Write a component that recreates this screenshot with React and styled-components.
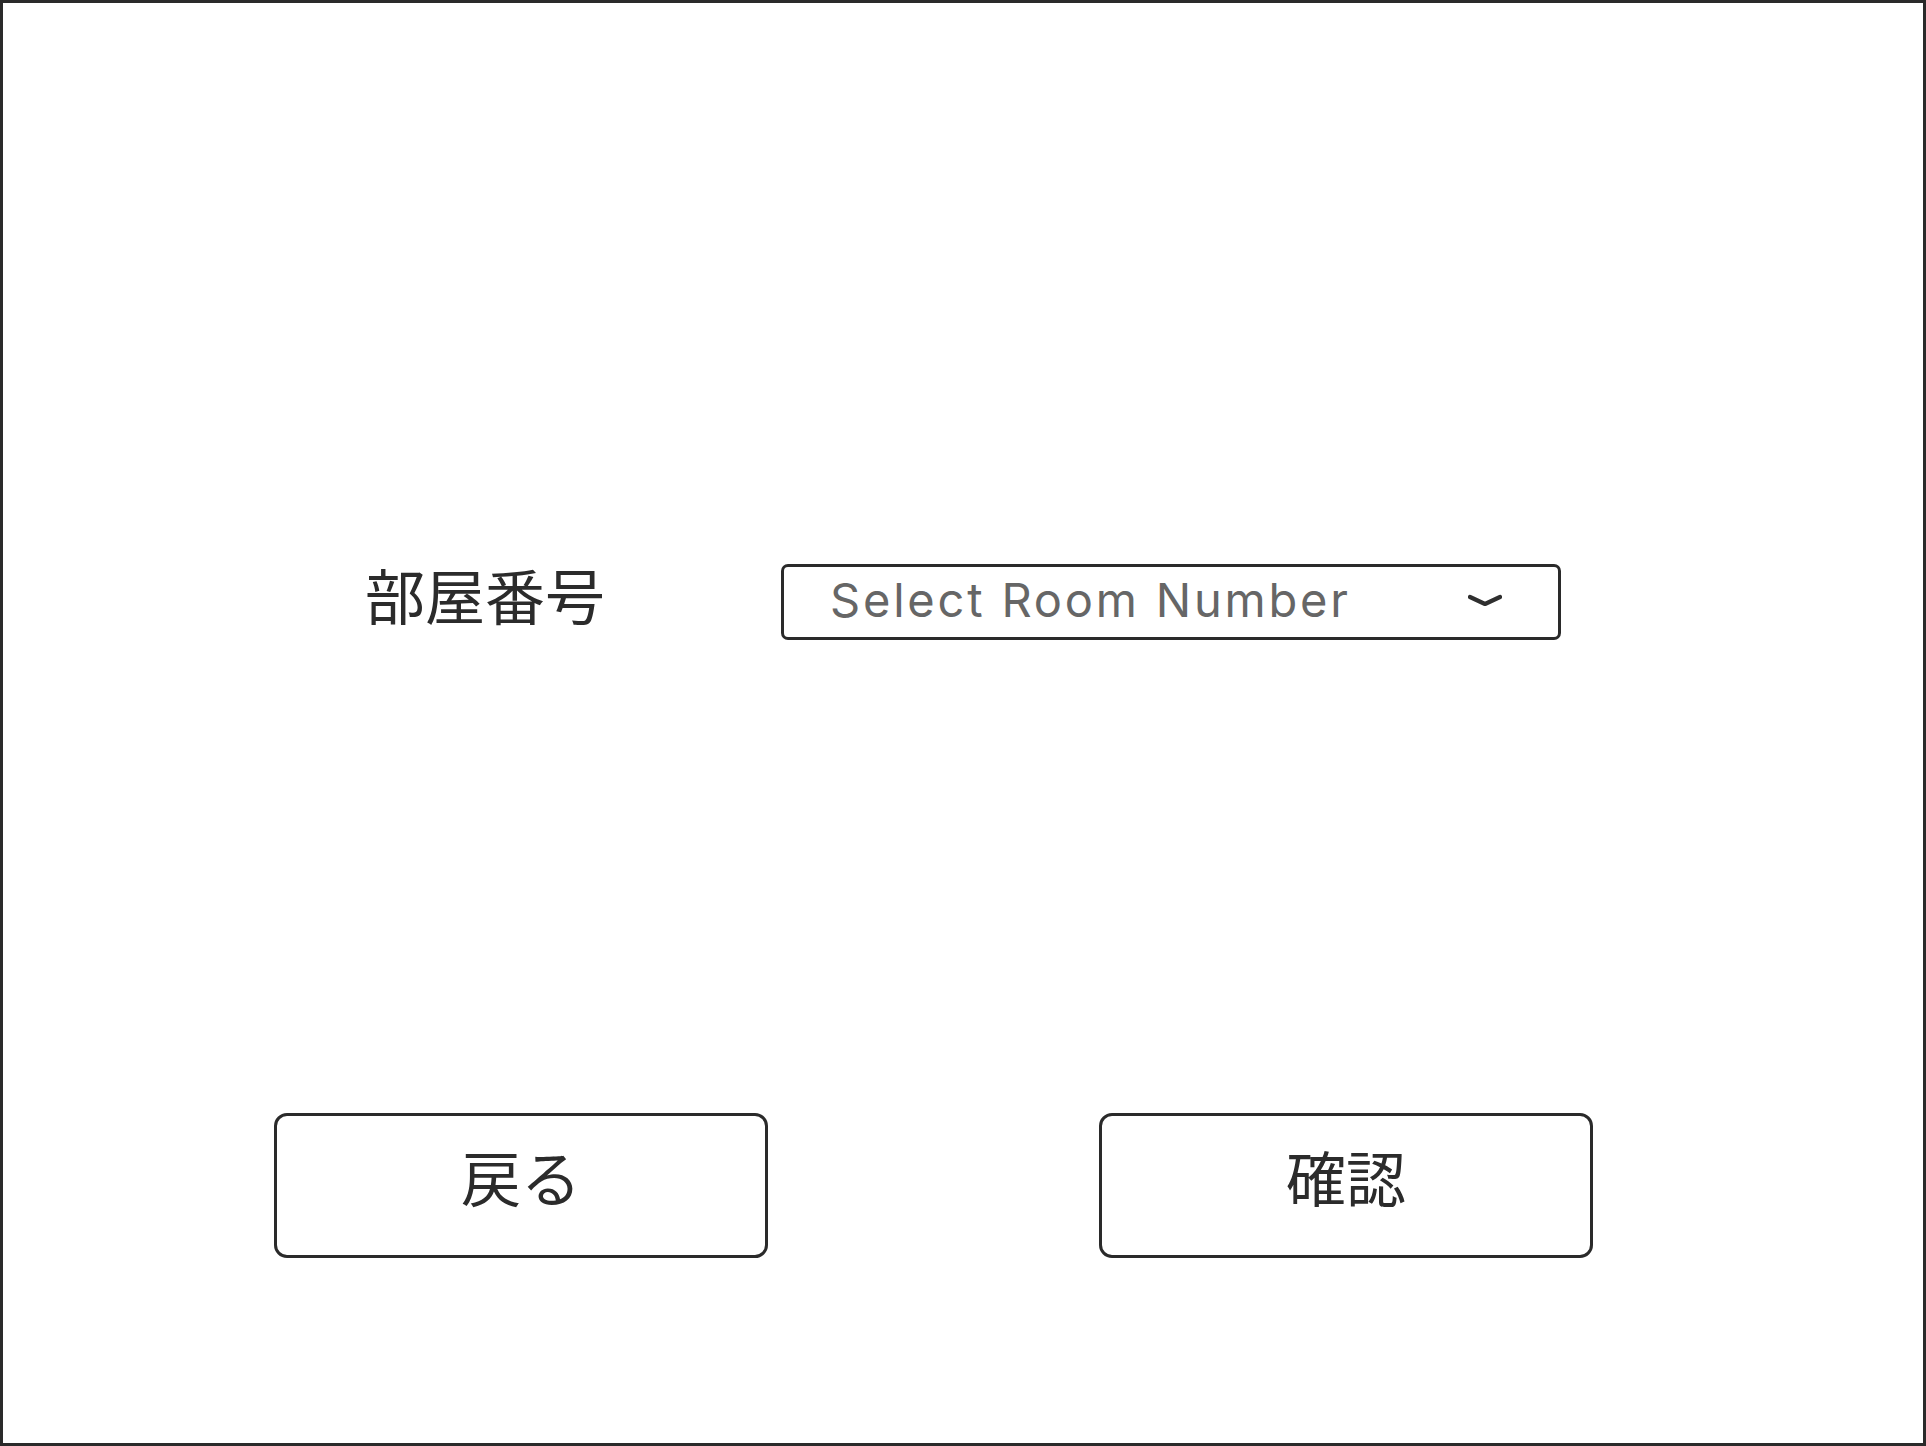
import React from "react";
import styled, { createGlobalStyle } from "styled-components";

const GlobalStyle = createGlobalStyle`
  html, body {
    margin: 0;
    padding: 0;
    background: #fff;
  }
  * {
    box-sizing: border-box;
  }
`;

const Frame = styled.div`
  width: 1926px;
  height: 1446px;
  border: 3px solid #2a2a2a;
  display: flex;
  flex-direction: column;
  font-family: "Noto Sans CJK JP", "Noto Sans", sans-serif;
  color: #2b2b2b;
`;

const FieldRow = styled.div`
  display: flex;
  align-items: center;
  margin-top: 561px;
  padding-left: 362px;
`;

const Label = styled.div`
  width: 416px;
  font-size: 60px;
  line-height: 1;
  padding-bottom: 16px;
`;

const SelectBox = styled.div`
  width: 780px;
  height: 76px;
  border: 3px solid #2a2a2a;
  border-radius: 7px;
  display: flex;
  align-items: center;
  justify-content: space-between;
  padding: 0 56px 0 46px;
`;

const Placeholder = styled.span`
  font-family: "Inter", "Liberation Sans", sans-serif;
  font-size: 47px;
  color: #666;
  letter-spacing: 2.8px;
  line-height: 1;
  padding-bottom: 6px;
`;

const Chevron = () => (
  <svg width="34" height="14" viewBox="0 0 34 14" style={{ marginBottom: 3 }}>
    <path
      d="M2 3 L17 10 L32 3"
      fill="none"
      stroke="#2f2f2f"
      strokeWidth="4.2"
      strokeLinecap="round"
      strokeLinejoin="round"
    />
  </svg>
);

const ButtonRow = styled.div`
  display: flex;
  gap: 331px;
  margin-top: 473px;
  padding-left: 271px;
`;

const Button = styled.button`
  width: 494px;
  height: 145px;
  background: #fff;
  border: 3px solid #2a2a2a;
  border-radius: 13px;
  font-family: "Noto Sans CJK JP", "Noto Sans", sans-serif;
  font-size: 60px;
  color: #2b2b2b;
  line-height: 1;
  padding: 0 0 20px;
  cursor: pointer;
`;

export default function App() {
  return (
    <>
      <GlobalStyle />
      <Frame>
        <FieldRow>
          <Label>部屋番号</Label>
          <SelectBox>
            <Placeholder>Select Room Number</Placeholder>
            <Chevron />
          </SelectBox>
        </FieldRow>
        <ButtonRow>
          <Button>戻る</Button>
          <Button>確認</Button>
        </ButtonRow>
      </Frame>
    </>
  );
}
